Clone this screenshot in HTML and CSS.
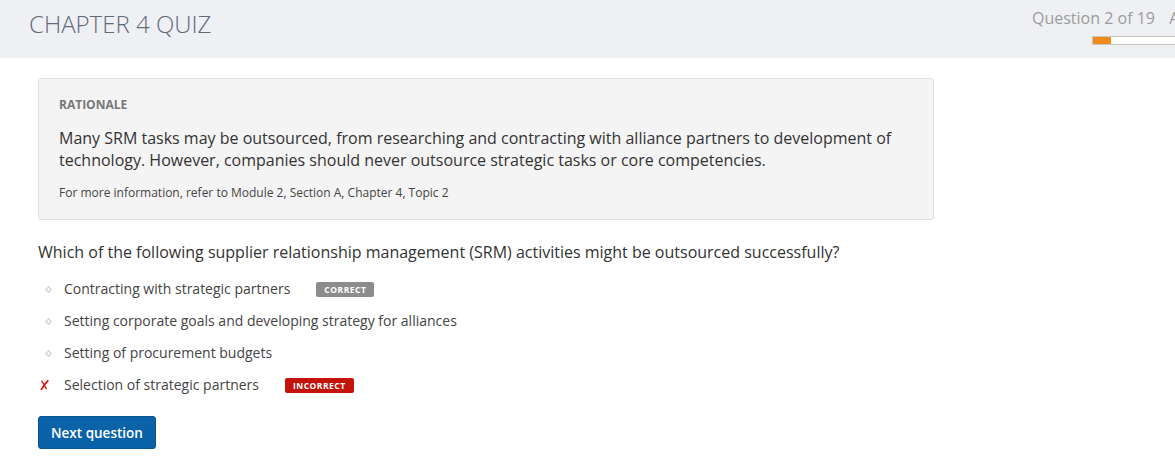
FILE: index.html
```html
<!DOCTYPE html>
<html lang="en">
<head>
<meta charset="utf-8">
<title>Chapter 4 Quiz</title>
<link rel="stylesheet" href="styles.css">
</head>
<body>
<header class="topbar">
  <h1 class="quiz-title">CHAPTER 4 QUIZ</h1>
  <div class="progress-area">
    <div class="progress-label">Question 2 of 19 <span class="cut">A</span></div>
    <div class="progress-track"><div class="progress-fill" style="width:18px"></div></div>
  </div>
</header>
<main class="content">
  <section class="rationale">
    <div class="rationale-head">RATIONALE</div>
    <p class="rationale-text">Many SRM tasks may be outsourced, from researching and contracting with alliance partners to development of technology. However, companies should never outsource strategic tasks or core competencies.</p>
    <p class="rationale-ref">For more information, refer to Module 2, Section A, Chapter 4, Topic 2</p>
  </section>
  <p class="question">Which of the following supplier relationship management (SRM) activities might be outsourced successfully?</p>
  <ul class="options">
    <li class="option">
      <span class="marker"><svg width="7" height="7" viewBox="0 0 7 7"><path d="M3.5 0.8 L6.2 3.5 L3.5 6.2 L0.8 3.5 Z" fill="none" stroke="#d0d0d0" stroke-width="1.3"/></svg></span>
      <span class="opt-text">Contracting with strategic partners</span>
      <span class="badge badge-correct">CORRECT</span>
    </li>
    <li class="option">
      <span class="marker"><svg width="7" height="7" viewBox="0 0 7 7"><path d="M3.5 0.8 L6.2 3.5 L3.5 6.2 L0.8 3.5 Z" fill="none" stroke="#d0d0d0" stroke-width="1.3"/></svg></span>
      <span class="opt-text">Setting corporate goals and developing strategy for alliances</span>
    </li>
    <li class="option">
      <span class="marker"><svg width="7" height="7" viewBox="0 0 7 7"><path d="M3.5 0.8 L6.2 3.5 L3.5 6.2 L0.8 3.5 Z" fill="none" stroke="#d0d0d0" stroke-width="1.3"/></svg></span>
      <span class="opt-text">Setting of procurement budgets</span>
    </li>
    <li class="option">
      <span class="marker marker-wrong"><svg width="9" height="10" viewBox="0 0 9 10"><path d="M7.8 0.8 C5.5 3 3.5 6 1.4 9.4" fill="none" stroke="#e0140c" stroke-width="1.8" stroke-linecap="round"/><path d="M1.8 1.2 C3.5 3.5 5 6 6.2 8.8" fill="none" stroke="#e0140c" stroke-width="1.4" stroke-linecap="round"/></svg></span>
      <span class="opt-text">Selection of strategic partners</span>
      <span class="badge badge-incorrect">INCORRECT</span>
    </li>
  </ul>
  <button class="next-btn" type="button">Next question</button>
</main>
</body>
</html>
```
FILE: styles.css
```css
html, body {
  margin: 0;
  padding: 0;
  background: #ffffff;
  font-family: "Open Sans", "Liberation Sans", sans-serif;
  overflow: hidden;
}

.topbar {
  display: flex;
  align-items: flex-start;
  height: 58px;
  background: #eff0f4;
  padding-left: 29px;
  overflow: hidden;
  box-sizing: border-box;
}

.quiz-title {
  margin: 7px 0 0 0;
  font-size: 24px;
  line-height: 33px;
  font-weight: 300;
  color: #5f6a78;
}

.progress-area {
  margin-left: auto;
  width: 143px;
  flex-shrink: 0;
  padding-top: 7px;
}

.progress-label {
  font-size: 16px;
  line-height: 22px;
  color: #9c9c9c;
  white-space: nowrap;
}

.progress-label .cut {
  margin-left: 10px;
}

.progress-track {
  margin-top: 7px;
  margin-left: 60px;
  width: 200px;
  height: 9px;
  box-sizing: border-box;
  border: 1px solid #c9c6c0;
  background: #ffffff;
}

.progress-fill {
  height: 100%;
  background: #f18a1c;
}

.content {
  padding: 20px 38px 0 38px;
}

.rationale {
  width: 896px;
  box-sizing: border-box;
  background: #f4f4f4;
  border: 1px solid #e0e0e0;
  border-radius: 3px;
  padding: 17px 20px 17px 20px;
}

.rationale-head {
  font-size: 12px;
  line-height: 18px;
  font-weight: 700;
  color: #777777;
}

.rationale-text {
  margin: 12.5px 0 0 0;
  font-size: 16px;
  line-height: 22px;
  color: #333333;
}

.rationale-ref {
  margin: 13.5px 0 0 0;
  font-size: 12px;
  line-height: 18px;
  color: #444444;
}

.question {
  margin: 21px 0 0 0;
  font-size: 16px;
  line-height: 22px;
  color: #333333;
}

.options {
  list-style: none;
  margin: 10px 0 0 0;
  padding: 0;
}

.option {
  display: flex;
  align-items: center;
  height: 32px;
  font-size: 14px;
  color: #444444;
}

.marker {
  width: 26px;
  display: flex;
  align-items: center;
  padding-left: 7px;
  box-sizing: border-box;
}

.marker-wrong {
  padding-left: 2px;
}

.opt-text {
  line-height: 32px;
}

.badge {
  display: inline-block;
  margin-left: 26px;
  height: 15px;
  line-height: 15px;
  padding: 0 8px;
  font-size: 8.5px;
  font-weight: 700;
  letter-spacing: 0.5px;
  color: #ffffff;
  border-radius: 2px;
}

.badge-correct {
  background: #8c8c8c;
}

.badge-incorrect {
  background: #c4140a;
}

.next-btn {
  margin-top: 15px;
  height: 33px;
  padding: 0 12px;
  background: #0a63a8;
  border: 1px solid #08558f;
  border-radius: 3px;
  color: #ffffff;
  font-family: "Open Sans", "Liberation Sans", sans-serif;
  font-size: 13.5px;
  font-weight: 600;
  cursor: pointer;
}
```
